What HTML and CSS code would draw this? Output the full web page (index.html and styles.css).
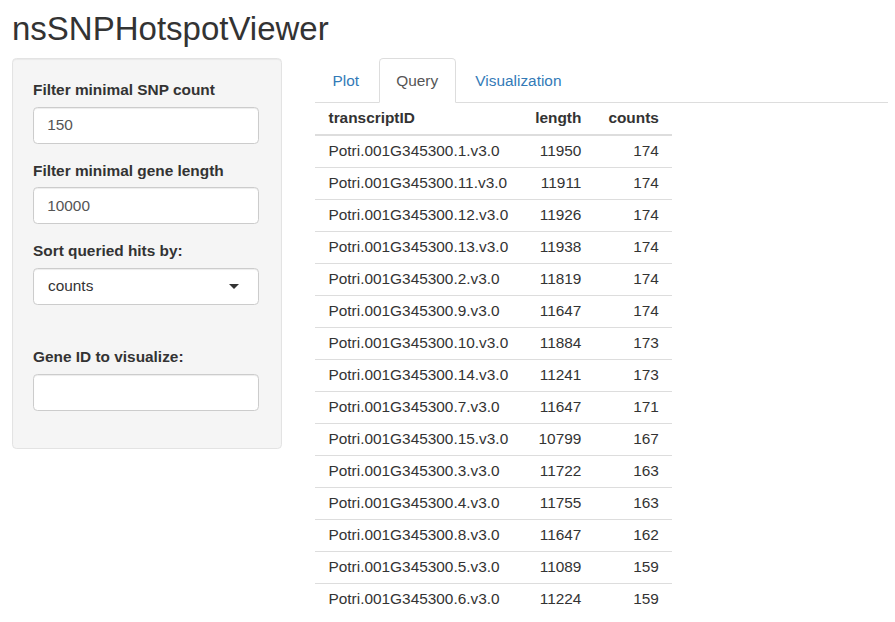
FILE: index.html
```html
<!DOCTYPE html>
<html>
<head>
<meta charset="utf-8">
<title>nsSNPHotspotViewer</title>
<link rel="stylesheet" href="styles.css">
</head>
<body>
<div class="page">
  <h2 class="title">nsSNPHotspotViewer</h2>
  <div class="row">
    <div class="sidebar">
      <div class="well">
        <div class="form-group">
          <label class="control-label">Filter minimal SNP count</label>
          <input class="form-control" type="text" value="150">
        </div>
        <div class="form-group">
          <label class="control-label">Filter minimal gene length</label>
          <input class="form-control" type="text" value="10000">
        </div>
        <div class="form-group select-group">
          <label class="control-label">Sort queried hits by:</label>
          <div class="selectize"><span class="sel-text">counts</span><span class="caret"></span></div>
        </div>
        <div class="form-group last">
          <label class="control-label">Gene ID to visualize:</label>
          <input class="form-control" type="text" value="">
        </div>
      </div>
    </div>
    <div class="main">
      <ul class="nav-tabs">
        <li><a class="tab">Plot</a></li>
        <li><a class="tab active">Query</a></li>
        <li><a class="tab">Visualization</a></li>
      </ul>
      <table class="table">
        <thead>
          <tr><th class="l">transcriptID</th><th class="r">length</th><th class="r">counts</th></tr>
        </thead>
        <tbody>
          <tr><td>Potri.001G345300.1.v3.0</td><td class="r">11950</td><td class="r">174</td></tr>
          <tr><td>Potri.001G345300.11.v3.0</td><td class="r">11911</td><td class="r">174</td></tr>
          <tr><td>Potri.001G345300.12.v3.0</td><td class="r">11926</td><td class="r">174</td></tr>
          <tr><td>Potri.001G345300.13.v3.0</td><td class="r">11938</td><td class="r">174</td></tr>
          <tr><td>Potri.001G345300.2.v3.0</td><td class="r">11819</td><td class="r">174</td></tr>
          <tr><td>Potri.001G345300.9.v3.0</td><td class="r">11647</td><td class="r">174</td></tr>
          <tr><td>Potri.001G345300.10.v3.0</td><td class="r">11884</td><td class="r">173</td></tr>
          <tr><td>Potri.001G345300.14.v3.0</td><td class="r">11241</td><td class="r">173</td></tr>
          <tr><td>Potri.001G345300.7.v3.0</td><td class="r">11647</td><td class="r">171</td></tr>
          <tr><td>Potri.001G345300.15.v3.0</td><td class="r">10799</td><td class="r">167</td></tr>
          <tr><td>Potri.001G345300.3.v3.0</td><td class="r">11722</td><td class="r">163</td></tr>
          <tr><td>Potri.001G345300.4.v3.0</td><td class="r">11755</td><td class="r">163</td></tr>
          <tr><td>Potri.001G345300.8.v3.0</td><td class="r">11647</td><td class="r">162</td></tr>
          <tr><td>Potri.001G345300.5.v3.0</td><td class="r">11089</td><td class="r">159</td></tr>
          <tr><td>Potri.001G345300.6.v3.0</td><td class="r">11224</td><td class="r">159</td></tr>
        </tbody>
      </table>
    </div>
  </div>
</div>
</body>
</html>
```
FILE: styles.css
```css
html, body {
  margin: 0;
  padding: 0;
  background: #fff;
}
body {
  font-family: "Liberation Sans", Arial, sans-serif;
  font-size: 15.4px;
  line-height: 22px;
  color: #333;
}
.page {
  padding: 0 7px 0 12px;
}
.title {
  font-family: "Liberation Sans", Arial, sans-serif;
  font-weight: 500;
  font-size: 33px;
  line-height: 36.3px;
  margin: 11px 0 10.3px 0;
  color: #333;
}
.row {
  display: flex;
  align-items: flex-start;
  gap: 33px;
}
.sidebar {
  width: 270px;
  flex: none;
}
.well {
  box-sizing: border-box;
  width: 270px;
  background: #f5f5f5;
  border: 1px solid #e3e3e3;
  border-radius: 4.4px;
  box-shadow: inset 0 1px 1px rgba(0,0,0,.05);
  padding: 20.5px 22px 20px 20px;
}
.form-group {
  margin-bottom: 16px;
}
.form-group.select-group {
  margin-bottom: 41.5px;
}
.form-group.last {
  margin-bottom: 17px;
}
.control-label {
  display: block;
  font-weight: bold;
  line-height: 22px;
  margin-bottom: 5.5px;
}
.form-control {
  display: block;
  box-sizing: border-box;
  width: 100%;
  height: 37px;
  padding: 6.6px 13.2px;
  font-family: "Liberation Sans", Arial, sans-serif;
  font-size: 15.4px;
  line-height: 22px;
  color: #555;
  background: #fff;
  border: 1px solid #ccc;
  border-radius: 4.4px;
  box-shadow: inset 0 1px 1px rgba(0,0,0,.075);
  outline: none;
}
.selectize {
  box-sizing: border-box;
  height: 37px;
  display: flex;
  align-items: center;
  justify-content: space-between;
  padding: 0 19px 0 14px;
  background: #fff;
  border: 1px solid #ccc;
  border-radius: 4.4px;
  box-shadow: inset 0 1px 1px rgba(0,0,0,.075);
  color: #333;
}
.caret {
  width: 0;
  height: 0;
  border-style: solid;
  border-width: 5.5px 5.5px 0 5.5px;
  border-color: #333 transparent transparent transparent;
}
.main {
  flex: 1;
  min-width: 0;
}
.nav-tabs {
  list-style: none;
  margin: 0;
  padding: 0;
  display: flex;
  border-bottom: 1px solid #ddd;
}
.nav-tabs li {
  margin-right: 2.2px;
  margin-bottom: -1px;
}
.tab {
  display: block;
  padding: 11px 16.5px 10px;
  line-height: 22px;
  border: 1px solid transparent;
  border-radius: 4.4px 4.4px 0 0;
  color: #337ab7;
  text-decoration: none;
}
.tab.active {
  color: #555;
  background: #fff;
  border-color: #ddd #ddd transparent #ddd;
}
.table {
  border-collapse: collapse;
  border-spacing: 0;
  margin: 0;
}
.table th, .table td {
  padding: 4.5px 13.5px;
  line-height: 22px;
  white-space: nowrap;
}
.table th {
  font-weight: bold;
  border-bottom: 2px solid #ddd;
  text-align: left;
}
.table td {
  border-top: 1px solid #ddd;
}
.table .r {
  text-align: right;
}
```
